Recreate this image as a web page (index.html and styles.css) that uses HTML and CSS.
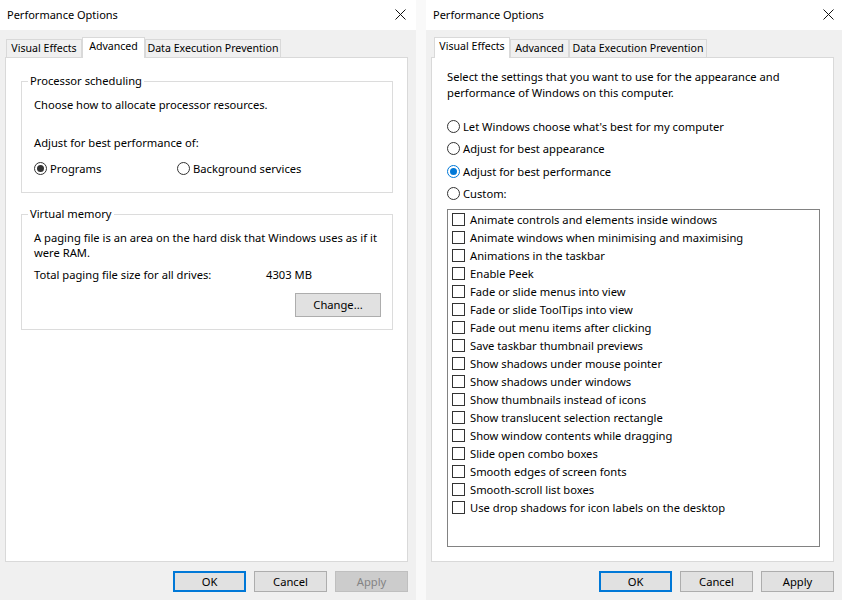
FILE: index.html
```html
<!DOCTYPE html>
<html lang="en">
<head>
<meta charset="utf-8">
<title>Performance Options</title>
<link rel="stylesheet" href="styles.css">
</head>
<body>
<div class="screen">
  <section class="window">
    <header class="titlebar">
      <span class="title">Performance Options</span>
      <svg class="close" width="11" height="11" viewBox="0 0 11 11"><path d="M0.5 0.5 L10.5 10.5 M10.5 0.5 L0.5 10.5" stroke="#111" stroke-width="1" fill="none"/></svg>
    </header>
    <div class="client">
      <div class="tabs">
        <div class="tab tab-ve">Visual Effects</div>
        <div class="tab tab-active tab-adv-active">Advanced</div>
        <div class="tab tab-dep">Data Execution Prevention</div>
      </div>
      <div class="panel panel-adv">
        <fieldset class="group group-sched">
          <legend class="legend">Processor scheduling</legend>
          <div class="group-body sched-body">
            <p class="line">Choose how to allocate processor resources.</p>
            <p class="line adjust">Adjust for best performance of:</p>
            <div class="radio-pair">
              <label class="radio-opt wide"><span class="radio checked"></span><span class="lbl">Programs</span></label>
              <label class="radio-opt"><span class="radio"></span><span class="lbl">Background services</span></label>
            </div>
          </div>
        </fieldset>
        <fieldset class="group group-vm">
          <legend class="legend">Virtual memory</legend>
          <div class="group-body vm-body">
            <p class="line">A paging file is an area on the hard disk that Windows uses as if it<br>were RAM.</p>
            <div class="total"><span class="total-label">Total paging file size for all drives:</span><span>4303 MB</span></div>
            <div class="change-row"><button class="btn btn-change">Change...</button></div>
          </div>
        </fieldset>
      </div>
      <div class="buttons">
        <button class="btn btn-default">OK</button>
        <button class="btn">Cancel</button>
        <button class="btn btn-disabled">Apply</button>
      </div>
    </div>
  </section>
  <div class="divider"></div>
  <section class="window window-right">
    <header class="titlebar titlebar-right">
      <span class="title">Performance Options</span>
      <svg class="close" width="11" height="11" viewBox="0 0 11 11"><path d="M0.5 0.5 L10.5 10.5 M10.5 0.5 L0.5 10.5" stroke="#111" stroke-width="1" fill="none"/></svg>
    </header>
    <div class="client">
      <div class="tabs tabs-right">
        <div class="tab tab-active tab-ve-active">Visual Effects</div>
        <div class="tab tab-adv">Advanced</div>
        <div class="tab tab-dep-r">Data Execution Prevention</div>
      </div>
      <div class="panel panel-ve">
        <p class="intro">Select the settings that you want to use for the appearance and<br>performance of Windows on this computer.</p>
        <div class="radio-list">
          <label class="radio-row"><span class="radio"></span><span class="lbl">Let Windows choose what's best for my computer</span></label>
          <label class="radio-row"><span class="radio"></span><span class="lbl">Adjust for best appearance</span></label>
          <label class="radio-row"><span class="radio checked focus"></span><span class="lbl">Adjust for best performance</span></label>
          <label class="radio-row"><span class="radio"></span><span class="lbl">Custom:</span></label>
        </div>
        <ul class="listbox">
          <li class="check-row"><span class="check"></span>Animate controls and elements inside windows</li>
          <li class="check-row"><span class="check"></span>Animate windows when minimising and maximising</li>
          <li class="check-row"><span class="check"></span>Animations in the taskbar</li>
          <li class="check-row"><span class="check"></span>Enable Peek</li>
          <li class="check-row"><span class="check"></span>Fade or slide menus into view</li>
          <li class="check-row"><span class="check"></span>Fade or slide ToolTips into view</li>
          <li class="check-row"><span class="check"></span>Fade out menu items after clicking</li>
          <li class="check-row"><span class="check"></span>Save taskbar thumbnail previews</li>
          <li class="check-row"><span class="check"></span>Show shadows under mouse pointer</li>
          <li class="check-row"><span class="check"></span>Show shadows under windows</li>
          <li class="check-row"><span class="check"></span>Show thumbnails instead of icons</li>
          <li class="check-row"><span class="check"></span>Show translucent selection rectangle</li>
          <li class="check-row"><span class="check"></span>Show window contents while dragging</li>
          <li class="check-row"><span class="check"></span>Slide open combo boxes</li>
          <li class="check-row"><span class="check"></span>Smooth edges of screen fonts</li>
          <li class="check-row"><span class="check"></span>Smooth-scroll list boxes</li>
          <li class="check-row"><span class="check"></span>Use drop shadows for icon labels on the desktop</li>
        </ul>
      </div>
      <div class="buttons">
        <button class="btn btn-default">OK</button>
        <button class="btn">Cancel</button>
        <button class="btn">Apply</button>
      </div>
    </div>
  </section>
</div>
</body>
</html>
```

FILE: styles.css
```css
* { box-sizing: border-box; }
html, body { margin: 0; padding: 0; }
body {
  width: 842px;
  height: 600px;
  overflow: hidden;
  background: #f8f8f8;
  font-family: "Noto Sans", "Open Sans", sans-serif;
  font-size: 11.2px;
  color: #000;
}
p { margin: 0; }
.screen { display: flex; width: 842px; height: 600px; }
.window {
  width: 416px;
  flex: none;
  height: 600px;
  background: #f0f0f0;
  display: flex;
  flex-direction: column;
}
.divider { width: 10px; flex: none; background: #f9f9f9; }
.titlebar {
  height: 30px;
  flex: none;
  background: #fff;
  display: flex;
  align-items: center;
  justify-content: space-between;
  padding: 0 10px 1px 7px;
}
.titlebar-right { padding-right: 8px; }
.title { font-size: 11px; line-height: 16px; }
.close { display: block; }
.client { padding: 0 8px 0 5px; }
.tabs {
  margin-top: 7px;
  height: 20px;
  display: flex;
  align-items: flex-end;
  padding-left: 1px;
}
.tabs-right { padding-left: 3px; }
.tab {
  height: 18px;
  border: 1px solid #d9d9d9;
  border-bottom: none;
  background: #f0f0f0;
  text-align: center;
  line-height: 16px;
  white-space: nowrap;
  font-size: 10.6px;
}
.tab-active {
  height: 21px;
  background: #fff;
  margin-bottom: -1px;
  position: relative;
  z-index: 1;
  line-height: 17px;
}
.tab-ve { width: 76px; }
.tab-adv-active { width: 63px; }
.tab-dep { width: 136px; }
.tab-ve-active { width: 76px; }
.tab-adv { width: 59px; }
.tab-dep-r { width: 138px; }
.panel {
  width: 403px;
  height: 505px;
  background: #fff;
  border: 1px solid #d9d9d9;
}
.line { line-height: 15px; }
.group {
  margin: 0 14px 0 15px;
  padding: 0;
  border: 1px solid #dcdcdc;
  min-width: 0;
}
.legend {
  margin-left: 6px;
  padding: 0 2px;
  line-height: 16px;
}
.group-sched { margin-top: 15px; }
.group-vm { margin-top: 13px; }
.group-body { padding: 0 11px 0 12px; }
.sched-body { padding-top: 8px; padding-bottom: 16px; }
.adjust { margin-top: 23px; }
.radio-pair { display: flex; margin-top: 11px; height: 15px; align-items: center; }
.radio-opt { display: flex; align-items: center; }
.radio-opt.wide { width: 143px; }
.radio {
  width: 13px;
  height: 13px;
  border: 1px solid #333;
  border-radius: 50%;
  background: #fff;
  flex: none;
  display: flex;
  align-items: center;
  justify-content: center;
  margin-right: 3px;
}
.radio.checked::after {
  content: "";
  width: 7px;
  height: 7px;
  border-radius: 50%;
  background: #333;
}
.radio.focus { border-color: #0078d7; }
.radio.focus::after { background: #0078d7; }
.vm-body { padding-top: 8px; padding-bottom: 12px; }
.total { display: flex; margin-top: 7px; line-height: 15px; }
.total-label { width: 232px; }
.change-row { display: flex; justify-content: flex-end; margin-top: 11px; }
.btn {
  font: inherit;
  color: #000;
  width: 73px;
  height: 21px;
  background: #e1e1e1;
  border: 1px solid #adadad;
  padding: 0;
  margin: 0;
  line-height: 18px;
}
.btn-change { width: 86px; height: 24px; }
.btn-default { border: 2px solid #0078d7; }
.btn-disabled { background: #cccccc; border-color: #bfbfbf; color: #838383; }
.buttons {
  display: flex;
  justify-content: flex-end;
  gap: 8px;
  margin-top: 9px;
}
.panel-ve { padding: 11px 14px 0 15px; }
.intro { line-height: 16px; }
.radio-list { margin-top: 14px; }
.radio-row { display: flex; align-items: center; height: 22.5px; }
.listbox {
  list-style: none;
  margin: 4px 0 0 0;
  padding: 0 0 0 4px;
  width: 373px;
  height: 338px;
  border: 1px solid #828282;
}
.check-row { display: flex; align-items: center; height: 18px; }
.check {
  width: 13px;
  height: 13px;
  border: 1px solid #333;
  background: #fff;
  margin-right: 5px;
  flex: none;
}
```
